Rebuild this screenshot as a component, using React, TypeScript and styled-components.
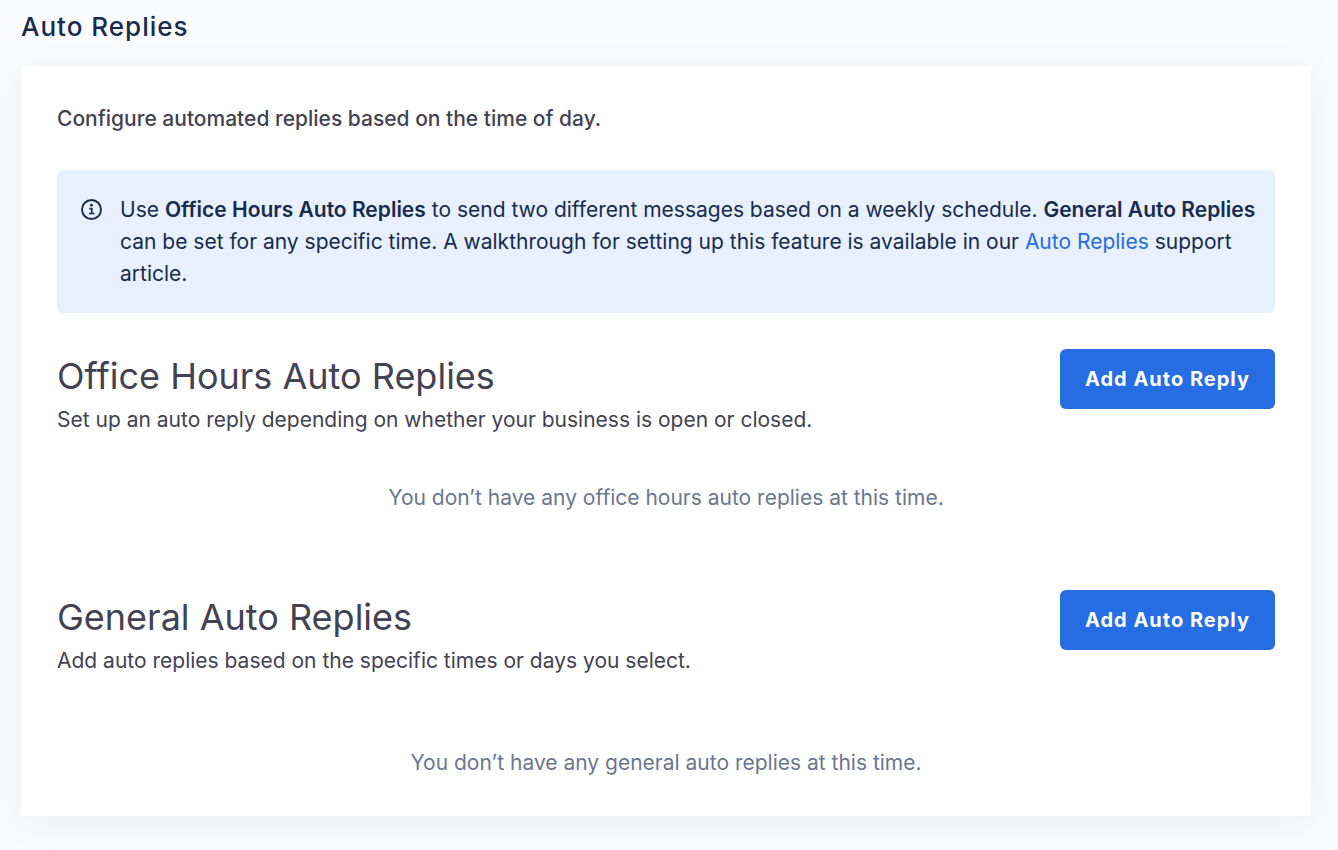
import React from "react";
import styled, { createGlobalStyle } from "styled-components";

const GlobalStyle = createGlobalStyle`
  *, *::before, *::after { box-sizing: border-box; }
  body {
    margin: 0;
    min-height: 100vh;
    background: #fafbfd;
    color: #434251;
    font-family: Inter, "Liberation Sans", sans-serif;
    font-size: 21px;
    line-height: 32px;
  }
  h1, h2, p { margin: 0; }
`;

const Page = styled.main`
  padding: 9px 27px 34px 21px;
`;

const PageTitle = styled.h1`
  color: #172b4d;
  font-size: 26px;
  font-weight: 500;
  line-height: 36px;
  letter-spacing: 1px;
`;

const Card = styled.section`
  margin-top: 22px;
  padding: 36px 36px 37px;
  background: #fff;
  box-shadow: 0 6px 36px rgba(0, 0, 0, 0.06);
`;

const Intro = styled.p`
  font-weight: 500;
`;

const Notice = styled.aside`
  display: flex;
  gap: 17px;
  margin-top: 35px;
  padding: 24px 16px 23px 24px;
  border-radius: 6px;
  background: #e8f0fe;
  color: #172b4d;

  strong {
    font-weight: 600;
  }
`;

const NoticeIcon = styled.svg`
  flex: none;
  width: 22px;
  height: 22px;
  margin-top: 4px;
`;

const NoticeLink = styled.a`
  color: #266ce2;
  text-decoration: none;
`;

const Group = styled.section<{ $roomy?: boolean }>`
  margin-top: ${(p) => (p.$roomy ? 76 : 36)}px;
`;

const GroupHeader = styled.header`
  display: flex;
  align-items: flex-start;
  justify-content: space-between;
  gap: 24px;
`;

const GroupTitle = styled.h2`
  font-size: 36px;
  font-weight: 400;
  line-height: 55px;
`;

const AddButton = styled.button`
  flex: none;
  height: 60px;
  padding: 0 25px;
  border: 0;
  border-radius: 6px;
  background: #266ce2;
  color: #fff;
  font: 700 20px/32px Inter, "Liberation Sans", sans-serif;
  letter-spacing: 1px;
  cursor: pointer;
`;

const Empty = styled.p<{ $roomy?: boolean }>`
  margin-top: ${(p) => (p.$roomy ? 70 : 46)}px;
  color: #6b778c;
  text-align: center;
`;

type ReplyGroupProps = {
  title: string;
  description: string;
  empty: string;
  roomy?: boolean;
};

function ReplyGroup({ title, description, empty, roomy }: ReplyGroupProps) {
  return (
    <Group $roomy={roomy}>
      <GroupHeader>
        <div>
          <GroupTitle>{title}</GroupTitle>
          <p>{description}</p>
        </div>
        <AddButton type="button">Add Auto Reply</AddButton>
      </GroupHeader>
      <Empty $roomy={roomy}>{empty}</Empty>
    </Group>
  );
}

export default function App() {
  return (
    <>
      <GlobalStyle />
      <Page>
        <PageTitle>Auto Replies</PageTitle>
        <Card>
          <Intro>Configure automated replies based on the time of day.</Intro>
          <Notice>
            <NoticeIcon viewBox="0 0 22 22" fill="none" stroke="currentColor" aria-hidden="true">
              <circle cx="10.5" cy="11.5" r="9.5" strokeWidth="1.9" />
              <circle cx="10.4" cy="7.2" r="1.4" fill="currentColor" stroke="none" />
              <path d="M8.3 10.6h2.5v4.6M8 15.5h5.4" strokeWidth="1.7" />
            </NoticeIcon>
            <p>
              Use <strong>Office Hours Auto Replies</strong> to send two different messages based on a
              weekly schedule. <strong>General Auto Replies</strong> can be set for any specific time. A
              walkthrough for setting up this feature is available in our{" "}
              <NoticeLink href="#auto-replies">Auto Replies</NoticeLink> support article.
            </p>
          </Notice>
          <ReplyGroup
            title="Office Hours Auto Replies"
            description="Set up an auto reply depending on whether your business is open or closed."
            empty="You don’t have any office hours auto replies at this time."
          />
          <ReplyGroup
            roomy
            title="General Auto Replies"
            description="Add auto replies based on the specific times or days you select."
            empty="You don’t have any general auto replies at this time."
          />
        </Card>
      </Page>
    </>
  );
}
